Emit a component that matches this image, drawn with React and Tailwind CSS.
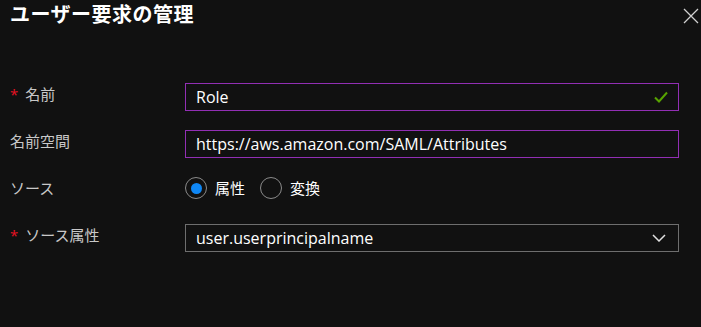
const font = { fontFamily: '"Open Sans", "Noto Sans CJK JP", sans-serif' };

const Field = ({ label, required, children }) => (
  <div className="flex items-center h-[28px]">
    <div className="w-[175px] flex items-center text-[15px] text-[#c8c8c8] -translate-y-[3px]">
      {required && <span className="text-[#e81123] mr-[7px] text-[15px]">*</span>}
      <span>{label}</span>
    </div>
    {children}
  </div>
);

const App = () => {
  return (
    <div
      className="w-[701px] h-[327px] bg-[#111111] text-white overflow-hidden pl-[10px] pr-[22px] pt-[3px]"
      style={font}
    >
      <div className="flex items-start justify-between">
        <h1 className="text-[20px] font-bold leading-[24px] tracking-[0.5px]">ユーザー要求の管理</h1>
        <svg width="16" height="16" viewBox="0 0 16 16" className="mt-[5px] -mr-[20px]">
          <path d="M1 1 L15 15 M15 1 L1 15" stroke="#d0d0d0" strokeWidth="1.3" />
        </svg>
      </div>

      <div className="flex flex-col gap-[19px] mt-[56px]">
        <Field label="名前" required>
          <div className="flex-1 h-[28px] border border-[#922fb4] flex items-center justify-between px-[10px] text-[16px]">
            <span>Role</span>
            <svg width="14" height="12" viewBox="0 0 14 12">
              <path d="M1 6.5 L5 10.5 L13 1.5" stroke="#57a300" strokeWidth="2" fill="none" />
            </svg>
          </div>
        </Field>

        <Field label="名前空間">
          <div className="flex-1 h-[28px] border border-[#922fb4] flex items-center px-[10px] text-[16px]">
            https://aws.amazon.com/SAML/Attributes
          </div>
        </Field>

        <Field label="ソース">
          <div className="flex items-center text-[15px] -translate-y-[3px]">
            <span className="w-[22px] h-[22px] rounded-full border border-[#8a8a8a] flex items-center justify-center">
              <span className="w-[11px] h-[11px] rounded-full bg-[#0f87f5]" />
            </span>
            <span className="ml-[8px]">属性</span>
            <span className="ml-[15px] w-[22px] h-[22px] rounded-full border border-[#8a8a8a]" />
            <span className="ml-[8px]">変換</span>
          </div>
        </Field>

        <Field label="ソース属性" required>
          <div className="flex-1 h-[28px] border border-[#6e6e6e] flex items-center justify-between px-[10px] pr-[12px] text-[16px]">
            <span>user.userprincipalname</span>
            <svg width="14" height="8" viewBox="0 0 14 8">
              <path d="M1 1 L7 7 L13 1" stroke="#e0e0e0" strokeWidth="1.5" fill="none" />
            </svg>
          </div>
        </Field>
      </div>
    </div>
  );
};

export default App;
